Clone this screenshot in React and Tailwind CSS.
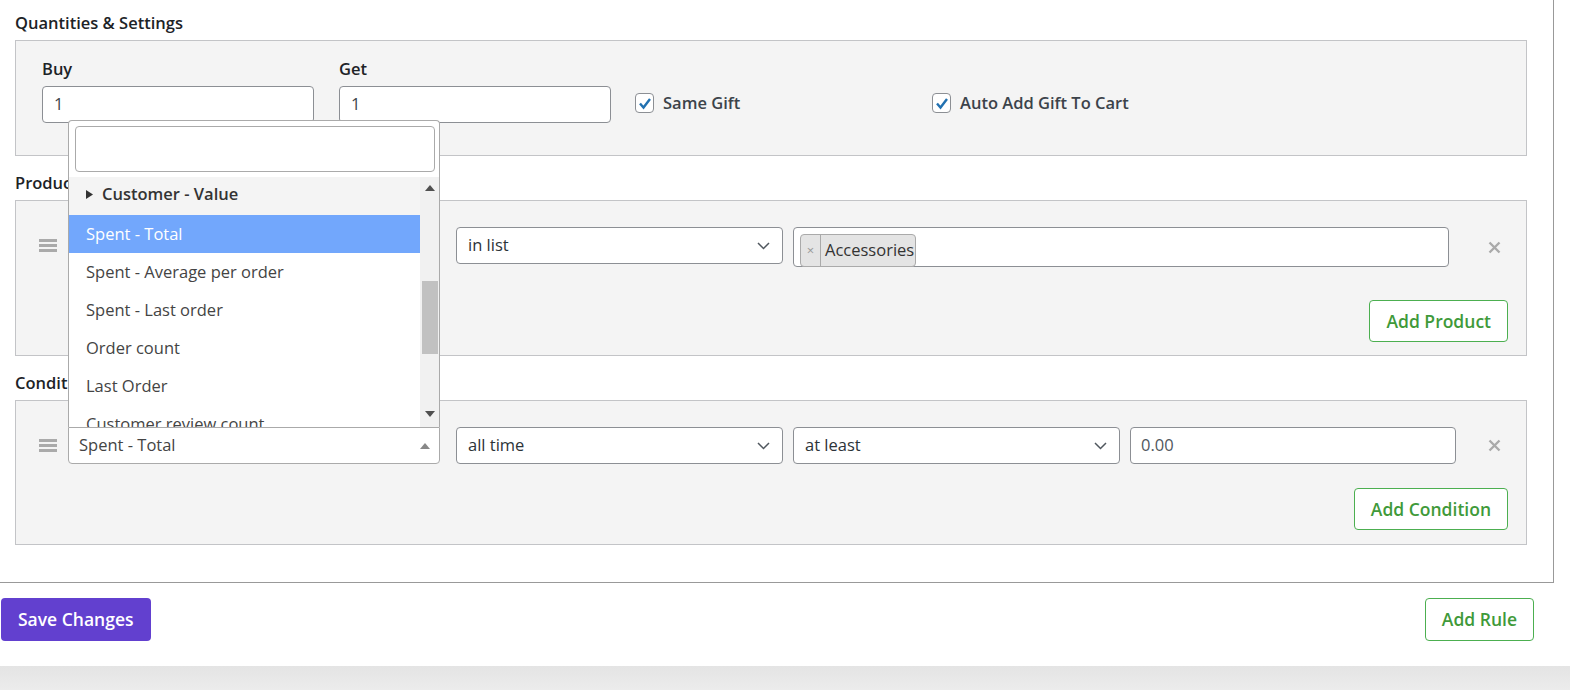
import React from 'react'

const font = { fontFamily: '"Open Sans", "Liberation Sans", sans-serif' }

const Chevron = () => (
  <svg width="13" height="8" viewBox="0 0 13 8" className="shrink-0">
    <polyline points="1,1 6.5,6.5 12,1" fill="none" stroke="#50575e" strokeWidth="1.5" />
  </svg>
)

const Handle = () => (
  <div className="w-[18px] flex flex-col gap-[2px] shrink-0">
    <div className="h-[3px] bg-[#aaa]" />
    <div className="h-[3px] bg-[#aaa]" />
    <div className="h-[3px] bg-[#aaa]" />
  </div>
)

const Remove = () => (
  <svg width="13" height="13" viewBox="0 0 13 13" className="shrink-0">
    <path d="M1.5 1.5 L11.5 11.5 M11.5 1.5 L1.5 11.5" stroke="#aaa" strokeWidth="2.4" />
  </svg>
)

const Check = () => (
  <div className="w-[19px] h-[20px] rounded-[4px] border border-[#8c8f94] bg-white flex items-center justify-center shrink-0">
    <svg width="14" height="13" viewBox="0 0 14 13">
      <path d="M2 6.5 L5.5 10.5 L12 2" fill="none" stroke="#2271b1" strokeWidth="2.4" />
    </svg>
  </div>
)

const Select = ({ value, w }) => (
  <div className={`${w} h-[37px] border border-[#8c8f94] rounded-[4px] bg-white flex items-center justify-between pl-[11px] pr-[12px] shrink-0`}>
    <span className="text-[16.5px] text-[#2c3338]">{value}</span>
    <Chevron />
  </div>
)

const GreenButton = ({ children }) => (
  <button className="h-[42px] px-[16px] rounded-[4px] border border-[#4caf50] bg-white text-[17.5px] font-semibold text-[#3f9a3a]">
    {children}
  </button>
)

const items = ['Spent - Average per order', 'Spent - Last order', 'Order count', 'Last Order', 'Customer review count']

const Dropdown = () => (
  <div className="absolute left-0 bottom-full w-[372px] h-[307px] bg-white border-t border-x border-[#aaa] rounded-t-[4px] flex flex-col">
    <div className="pl-[6px] pr-[4px] pt-[5px] pb-[5px]">
      <div className="h-[46px] border border-[#aaa] rounded-[4px] bg-white" />
    </div>
    <div className="flex flex-1 min-h-0">
      <div className="flex-1 overflow-hidden">
        <div className="h-[38px] bg-[#f4f4f4] flex items-center pl-[17px] pb-[4px] gap-[9px] text-[16.5px] font-semibold text-[#333]">
          <svg width="7" height="9" viewBox="0 0 7 9"><path d="M0 0 L7 4.5 L0 9 Z" fill="#333" /></svg>
          <span>Customer - Value</span>
        </div>
        <div className="h-[38px] bg-[#72a7fc] flex items-center pl-[17px] text-[16.5px] text-white">Spent - Total</div>
        {items.map((t) => (
          <div key={t} className="h-[38px] flex items-center pl-[17px] text-[16.5px] text-[#444]">{t}</div>
        ))}
      </div>
      <div className="w-[19px] bg-[#f1f1f1] relative shrink-0">
        <svg width="10" height="6" viewBox="0 0 10 6" className="absolute left-[5px] top-[8px]"><path d="M0 6 L5 0 L10 6 Z" fill="#505050" /></svg>
        <div className="absolute left-[2px] right-[1px] top-[104px] h-[73px] bg-[#c1c1c1]" />
        <svg width="10" height="6" viewBox="0 0 10 6" className="absolute left-[5px] bottom-[10px]"><path d="M0 0 L5 6 L10 0 Z" fill="#505050" /></svg>
      </div>
    </div>
  </div>
)

export default function App() {
  return (
    <div className="w-[1570px] h-[690px] bg-white flex flex-col overflow-hidden" style={font}>
      <div className="w-[1554px] border-r border-b border-[#999] pl-[15px] pt-[12px] pb-[37px]">
        {/* Quantities */}
        <h3 className="text-[16.5px] leading-[22px] font-semibold text-[#1d2327] mb-[6px]">Quantities &amp; Settings</h3>
        <div className="w-[1512px] h-[116px] border border-[#c3c4c7] bg-[#f4f4f4] pl-[26px] pt-[17px]">
          <div className="grid grid-cols-[272px_272px_272px_272px] gap-x-[25px] items-start">
            <div className="flex flex-col gap-[6px]">
              <label className="text-[16.5px] leading-[22px] font-semibold text-[#1d2327]">Buy</label>
              <div className="h-[37px] border border-[#8c8f94] rounded-[4px] bg-white flex items-center pl-[11px] text-[16.5px] text-[#3c434a]">1</div>
            </div>
            <div className="flex flex-col gap-[6px]">
              <label className="text-[16.5px] leading-[22px] font-semibold text-[#1d2327]">Get</label>
              <div className="h-[37px] border border-[#8c8f94] rounded-[4px] bg-white flex items-center pl-[11px] text-[16.5px] text-[#3c434a]">1</div>
            </div>
            <div className="flex items-center gap-[9px] pt-[33px] -ml-[1px]">
              <Check />
              <span className="text-[16.5px] font-semibold text-[#3c434a]">Same Gift</span>
            </div>
            <div className="flex items-center gap-[9px] pt-[33px] -ml-[1px]">
              <Check />
              <span className="text-[16.5px] font-semibold text-[#3c434a]">Auto Add Gift To Cart</span>
            </div>
          </div>
        </div>

        {/* Products */}
        <h3 className="text-[16.5px] leading-[22px] font-semibold text-[#1d2327] mt-[16px] mb-[6px]">Products</h3>
        <div className="w-[1512px] h-[156px] border border-[#c3c4c7] bg-[#f4f4f4] pt-[26px] pr-[18px] flex flex-col">
          <div className="flex items-start">
            <div className="h-[37px] flex items-center pl-[23px] mr-[11px]"><Handle /></div>
            <Select value="Customer - Value" w="w-[372px]" />
            <div className="w-[16px]" />
            <Select value="in list" w="w-[327px]" />
            <div className="w-[10px]" />
            <div className="w-[656px] h-[40px] border border-[#8c8f94] rounded-[4px] bg-white pl-[6px] pt-[6px] shrink-0">
              <div className="h-[33px] inline-flex items-stretch border border-[#aaa] rounded-[4px] bg-[#e4e4e4]">
                <span className="w-[20px] flex items-center justify-center border-r border-[#aaa] text-[13px] text-[#999]">×</span>
                <span className="pl-[4px] pr-[1px] flex items-center text-[16.5px] text-[#333]">Accessories</span>
              </div>
            </div>
            <div className="h-[40px] flex items-center ml-[39px]"><Remove /></div>
          </div>
          <div className="flex justify-end mt-[33px]">
            <GreenButton>Add Product</GreenButton>
          </div>
        </div>

        {/* Conditions */}
        <h3 className="text-[16.5px] leading-[22px] font-semibold text-[#1d2327] mt-[16px] mb-[6px]">Conditions</h3>
        <div className="w-[1512px] h-[145px] border border-[#c3c4c7] bg-[#f4f4f4] pt-[26px] pr-[18px] flex flex-col">
          <div className="flex items-start">
            <div className="h-[37px] flex items-center pl-[23px] mr-[11px]"><Handle /></div>
            <div className="relative w-[372px] shrink-0">
              <Dropdown />
              <div className="h-[37px] border border-[#aaa] rounded-b-[4px] bg-white flex items-center justify-between pl-[10px] pr-[9px]">
                <span className="text-[16.5px] text-[#444]">Spent - Total</span>
                <svg width="10" height="6" viewBox="0 0 10 6"><path d="M0 6 L5 0 L10 6 Z" fill="#888" /></svg>
              </div>
            </div>
            <div className="w-[16px]" />
            <Select value="all time" w="w-[327px]" />
            <div className="w-[10px]" />
            <Select value="at least" w="w-[327px]" />
            <div className="w-[10px]" />
            <div className="w-[326px] h-[37px] border border-[#8c8f94] rounded-[4px] bg-white flex items-center pl-[10px] text-[16.5px] text-[#50575e] shrink-0">0.00</div>
            <div className="h-[37px] flex items-center ml-[32px]"><Remove /></div>
          </div>
          <div className="flex justify-end mt-[24px]">
            <GreenButton>Add Condition</GreenButton>
          </div>
        </div>
      </div>

      {/* Footer */}
      <div className="w-[1534px] flex justify-between items-start mt-[15px] pl-[1px]">
        <button className="h-[43px] px-[17px] rounded-[4px] bg-[#6240cf] text-white text-[17.5px] font-semibold">Save Changes</button>
        <button className="h-[43px] px-[16px] rounded-[4px] border border-[#4caf50] bg-white text-[17.5px] font-semibold text-[#3f9a3a]">Add Rule</button>
      </div>
      <div className="mt-auto h-[24px] bg-gradient-to-b from-[#e4e4e4] to-[#ececec]" />
    </div>
  )
}
